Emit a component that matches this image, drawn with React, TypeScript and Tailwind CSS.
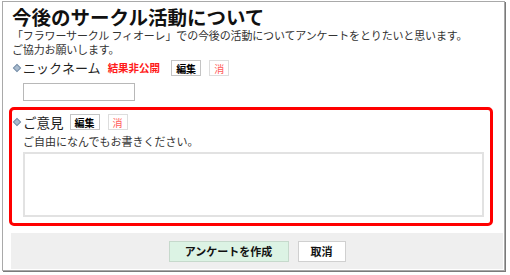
import React from "react";

const jp = { fontFamily: '"Noto Sans CJK JP", "Noto Sans", sans-serif' };

const Diamond = () => (
  <span className="ml-[3px] mr-[3px] inline-block h-[6px] w-[6px] rotate-45 border border-[#7d93ac] bg-[#a9bccf]" />
);

const SmallButtons = () => (
  <>
    <span className="flex h-[16px] w-[30px] items-center justify-center border border-[#c4c4c4] bg-white text-[10px] font-bold text-black">
      編集
    </span>
    <span className="ml-[8px] flex h-[16px] w-[20px] items-center justify-center border border-[#dddddd] bg-white text-[10px] text-[#ff5a5a]">
      消
    </span>
  </>
);

export default function App() {
  return (
    <div style={jp} className="h-[275px] w-[510px] bg-white">
      <div className="ml-[2px] mt-[1px] flex h-[270px] w-[503px] flex-col border border-[#a9a9a9] bg-white pb-[1px] pl-[8px] pr-[1px] shadow-[1px_1px_0_#7a7a7a]">
        <h1 className="mt-[4px] pl-[1px] text-[19.5px] font-bold leading-[22px] text-[#111]">
          今後のサークル活動について
        </h1>
        <p className="pl-[1px] text-[11px] leading-[14px] tracking-[-0.15px] text-[#333]">
          「フラワーサークル フィオーレ」での今後の活動についてアンケートをとりたいと思います。
          <br />
          ご協力お願いします。
        </p>

        <div className="mt-[3px] flex h-[18px] items-center">
          <Diamond />
          <span className="text-[13px] text-[#222]">ニックネーム</span>
          <span className="ml-[7px] mr-[11px] text-[10.5px] font-bold text-[#ff1a1a]">結果非公開</span>
          <SmallButtons />
        </div>
        <div className="ml-[12px] mt-[6px] h-[18px] w-[112px] border border-[#b8b8b8] bg-white" />

        <div className="relative mt-[12px]">
          <div className="flex h-[18px] items-center">
            <Diamond />
            <span className="mr-[6px] text-[13.5px] text-[#222]">ご意見</span>
            <SmallButtons />
          </div>
          <p className="ml-[12px] mt-[3px] text-[11px] leading-[14px] text-[#333]">
            ご自由になんでもお書きください。
          </p>
          <div className="ml-[12px] mt-[4px] h-[65px] w-[461px] border-2 border-[#e2e2e2] bg-white" />
          <div className="pointer-events-none absolute -left-[2px] -top-[6px] h-[119px] w-[484px] rounded-[5px] border-[3px] border-[#ff0000]" />
        </div>

        <div className="mt-auto flex h-[36px] items-center justify-center gap-[9px] bg-[#efefef]">
          <span className="flex h-[21px] w-[120px] items-center justify-center border border-[#c6d9cc] bg-[#dcf3e4] text-[11px] font-bold text-[#111]">
            アンケートを作成
          </span>
          <span className="flex h-[21px] w-[48px] items-center justify-center border border-[#d0d0d0] bg-white text-[11px] font-bold text-[#111]">
            取消
          </span>
        </div>
      </div>
    </div>
  );
}
